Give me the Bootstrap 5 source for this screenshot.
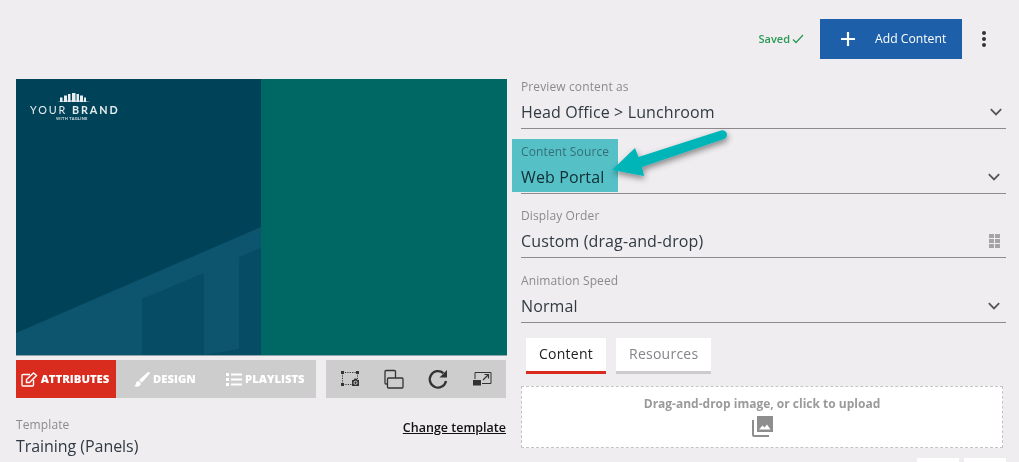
<!DOCTYPE html>
<html lang="en">
<head>
<meta charset="utf-8">
<title>Content editor</title>
<link href="https://cdn.jsdelivr.net/npm/bootstrap@5.3.0/dist/css/bootstrap.min.css" rel="stylesheet">
<style>
html,body{height:462px;overflow:hidden}
body{background:#efedf0;font-family:"Open Sans",sans-serif;color:#333;position:relative}
.topbar{height:79px;padding:19px 13px 0 0}
.saved-note{color:#2a9a55;font-size:11px;font-weight:600;margin-right:16px;gap:2px}
.add-btn{background:#1d5fa8;color:#fff;width:142px;height:40px;font-size:12.2px;border-radius:0;border:0;padding:0 0 0 20px;gap:19px}
.add-btn:hover{background:#1d5fa8;color:#fff}
.kebab{width:44px}
.main-wrap{padding-left:16px;gap:14px}
.left-col{width:491px;flex:none}
.right-col{width:485px;flex:none}
.preview{height:277px;display:block;width:491px;border-bottom:1px solid #8fa5ab}
.tool-row{margin-top:4px;gap:10px;width:490px}
.mode-tabs{background:#cdcdcd;height:38px;width:300px}
.mode-tab{font-size:11.3px;font-weight:800;color:#fff;gap:3px;height:38px}
.mode-tab.active-mode{background:#d92c1f;width:100px;padding-right:2px}
.mode-design{width:96px;padding-left:18px;gap:3px}
.mode-play{width:104px;padding-left:14px;gap:3px}
.tool-icons{background:#cdcdcd;height:38px;width:180px;padding-left:12px;gap:20px}
.tool-icons svg{display:block;flex:none}
.tpl-row{margin-top:19px;width:490px}
.fld-label{font-size:12px;color:#8d8a8e;line-height:16px;letter-spacing:.12px}
.tpl-value{font-size:16px;color:#2f3a42;line-height:22px;margin-top:2px;letter-spacing:-.05px}
.tpl-link{font-size:12.5px;font-weight:600;color:#111;margin-top:2px}
.fld{height:64.6px;width:485px;position:relative}
.fld-line{border-bottom:1px solid #8c8a8c;height:50px}
.fld-value{font-size:16px;line-height:22px;color:#2f3a42;margin-top:4px;height:26px;letter-spacing:.12px}
.tab-row{margin:15.5px 0 0 5px;gap:10px}
.tab-chip{background:#fff;height:36px;font-size:14px;padding:0 13px;border-bottom:3px solid #cdcbce;color:#85838a;line-height:31px;letter-spacing:.25px}
.tab-chip.tab-on{border-bottom-color:#d92c1f;color:#222;width:80px;text-align:center;padding:0}
.dropzone{background:#fff;border:1px dashed #c4c4c4;height:62px;width:482px;margin-top:12px;color:#9a9a9a;font-size:12px;font-weight:700;padding-top:8px}
.dropzone svg{display:block;margin-top:3px}
.mini-row{gap:5px;margin-top:10px;width:485px}
.mini-btn{width:42px;height:20px;background:#fff}
.marker{position:absolute;left:512px;top:139px;width:106px;height:53px;background:#5ccfd4;mix-blend-mode:multiply;pointer-events:none}
.arrow-over{position:absolute;left:600px;top:120px;width:140px;height:70px;pointer-events:none;overflow:visible}
</style>
</head>
<body>
<header class="topbar d-flex justify-content-end align-items-start">
  <div class="d-flex align-items-center">
    <span class="saved-note d-inline-flex align-items-center">Saved
      <svg width="12" height="10" viewBox="0 0 12 10" fill="none" stroke="#2a9a55" stroke-width="1.3"><path d="M1 5.500 4 8.500 11 1"/></svg>
    </span>
    <button class="btn add-btn d-flex align-items-center" type="button">
      <svg width="16" height="16" viewBox="0 0 16 16" stroke="#fff" stroke-width="2.200"><path d="M8 1v14M1 8h14"/></svg>
      <span>Add Content</span>
    </button>
    <div class="kebab d-flex justify-content-center">
      <svg width="6" height="18" viewBox="0 0 6 18" fill="#333"><circle cx="3" cy="3" r="2"/><circle cx="3" cy="9" r="2"/><circle cx="3" cy="15" r="2"/></svg>
    </div>
  </div>
</header>

<main class="main-wrap d-flex">
  <section class="left-col">
    <svg class="preview" viewBox="0 0 491 276" preserveAspectRatio="none">
      <rect width="491" height="276" fill="#006864"/>
      <rect width="245" height="276" fill="#004358"/>
      <path d="M0 254 245 148V276H0Z" fill="#0d546e"/>
      <path d="M126 220 188 194V276H126Z" fill="#064c65"/>
      <path d="M223 178 245 169V276H188L223 270Z" fill="#064c65"/>
      <path d="M41 23Q57 19 75 23Z" fill="#8fb0ba"/>
      <g fill="#e8eef0">
        <rect x="44" y="18.500" width="2.500" height="4.500"/><rect x="48" y="16.500" width="3" height="6.500"/><rect x="52" y="15" width="2.500" height="8"/><rect x="56" y="14" width="3.500" height="9"/><rect x="60.500" y="15" width="2.500" height="8"/><rect x="64" y="16.500" width="3" height="6.500"/><rect x="68" y="18.500" width="2" height="4.500"/>
      </g>
      <text x="14" y="34.500" font-family="Lato,sans-serif" font-size="10.800" letter-spacing="1.900" fill="#e8eef0"><tspan>YOUR </tspan><tspan font-weight="700">BRAND</tspan></text>
      <text x="40" y="40.500" font-family="Lato,sans-serif" font-size="4" font-weight="700" letter-spacing=".3" fill="#d5e0e4">WITH TAGLINE</text>
    </svg>
    <div class="tool-row d-flex">
      <div class="mode-tabs d-flex">
        <div class="mode-tab active-mode d-flex align-items-center justify-content-center">
          <svg width="17" height="15" viewBox="0 0 17 15" fill="none" stroke="#fff" stroke-width="1.400"><path d="M9 2.500H2a1 1 0 0 0-1 1V13a1 1 0 0 0 1 1h9.500a1 1 0 0 0 1-1V8"/><path d="M5.500 7.500 12.500 1l3 2.500-7 7H5.500Z"/></svg>
          <span>ATTRIBUTES</span>
        </div>
        <div class="mode-tab mode-design d-flex align-items-center">
          <svg width="16" height="15" viewBox="0 0 15 14" fill="#fff"><path d="M14.600.3c-.5-.5-1.300-.3-2 .2L6 6.300c-.6.5-.9 1-1 1.500l2 1.900c.6-.1 1.100-.5 1.500-1L14.300 2c.6-.7.800-1.200.3-1.700Z"/><path d="M4.300 8.400C2.700 8.600 2 9.700 1.800 11 1.700 12 1 12.600.2 12.800c1.500 1.100 3.300 1.200 4.700.4 1.200-.7 1.700-1.900 1.400-3Z"/></svg>
          <span>DESIGN</span>
        </div>
        <div class="mode-tab mode-play d-flex align-items-center">
          <svg width="16" height="13" viewBox="0 0 16 13" fill="#fff"><path d="M0 0h3v3H0zM0 5h3v3H0zM0 10h3v3H0zM5 .5h11v2H5zM5 5.500h11v2H5zM5 10.500h11v2H5z"/></svg>
          <span>PLAYLISTS</span>
        </div>
      </div>
      <div class="tool-icons d-flex align-items-center">
        <svg width="24" height="22" viewBox="0 0 24 22" fill="none" stroke="#333">
          <path d="M4.500 4.500h15M4.500 5v11.500h9M19.500 5v6" stroke-dasharray="1.200 1.200"/>
          <path d="M3 3h3v3H3zM18 3h3v3h-3zM3 15h3v3H3z" fill="#333" stroke="none"/>
          <path d="M14 12h1.500l1-1.500h2l1 1.500H21v6h-7z" fill="#333" stroke="none"/><circle cx="17.500" cy="14.800" r="1.600" stroke="#cdcdcd"/>
        </svg>
        <svg width="24" height="22" viewBox="0 0 24 22" fill="none" stroke="#333" stroke-width="1.300"><path d="M13.500 10V3.500a1 1 0 0 0-1-1H4a1 1 0 0 0-1 1V15a1 1 0 0 0 1 1h1.500"/><rect x="5.500" y="10" width="15.500" height="10" rx="1"/></svg>
        <svg width="24" height="22" viewBox="0 0 24 22" fill="none" stroke="#333" stroke-width="2.300"><path d="M20 13a8.200 8.200 0 1 1-2.600-7.800"/><path d="M21 2v7.500h-7.500Z" fill="#333" stroke="none"/></svg>
        <svg width="24" height="22" viewBox="0 0 24 22" fill="none" stroke="#333"><path d="M5 11V4.500h16v11H12"/><path d="M13 12l5-5M14.500 6.500H18.500V10.500" stroke-width="1.200"/><rect x="3" y="12" width="8" height="5.500" fill="#333" stroke="none"/></svg>
      </div>
    </div>
    <div class="tpl-row d-flex justify-content-between align-items-start">
      <div>
        <div class="fld-label">Template</div>
        <div class="tpl-value">Training (Panels)</div>
      </div>
      <a href="#" class="tpl-link">Change template</a>
    </div>
  </section>

  <section class="right-col">
    <div class="fld">
      <div class="fld-line">
        <div class="fld-label">Preview content as</div>
        <div class="fld-value d-flex justify-content-between align-items-center">
          <span>Head Office &gt; Lunchroom</span>
          <svg style="margin-right:4px" width="12" height="8" viewBox="0 0 12 8" fill="none" stroke="#555" stroke-width="1.800"><path d="M.8 1.200 6 6.400 11.200 1.200"/></svg>
        </div>
      </div>
    </div>
    <div class="fld">
      <div class="fld-line">
        <div class="fld-label">Content Source</div>
        <div class="fld-value d-flex justify-content-between align-items-center">
          <span>Web Portal</span>
          <svg style="margin-right:6px" width="12" height="8" viewBox="0 0 12 8" fill="none" stroke="#555" stroke-width="1.800"><path d="M.8 1.200 6 6.400 11.200 1.200"/></svg>
        </div>
      </div>
    </div>
    <div class="fld">
      <div class="fld-line">
        <div class="fld-label">Display Order</div>
        <div class="fld-value d-flex justify-content-between align-items-center">
          <span>Custom (drag-and-drop)</span>
          <svg style="margin-right:6px" width="11" height="14" viewBox="0 0 11 14" fill="#a5a3a5"><path d="M0 0h5v4H0zM6 0h5v4H6zM0 5h5v4H0zM6 5h5v4H6zM0 10h5v4H0zM6 10h5v4H6z"/></svg>
        </div>
      </div>
    </div>
    <div class="fld" style="height:auto">
      <div class="fld-line">
        <div class="fld-label">Animation Speed</div>
        <div class="fld-value d-flex justify-content-between align-items-center">
          <span>Normal</span>
          <svg style="margin-right:6px" width="12" height="8" viewBox="0 0 12 8" fill="none" stroke="#555" stroke-width="1.800"><path d="M.8 1.200 6 6.400 11.200 1.200"/></svg>
        </div>
      </div>
    </div>
    <div class="tab-row d-flex">
      <div class="tab-chip tab-on">Content</div>
      <div class="tab-chip">Resources</div>
    </div>
    <div class="dropzone d-flex flex-column align-items-center">
      <span>Drag-and-drop image, or click to upload</span>
      <svg width="21" height="21" viewBox="0 0 21 21" fill="#8e8e8e"><path d="M5 0h16v16H5Z"/><path d="M7 13.500l3.500-4 2 2 2.500-3 3.500 5Z" fill="#fff"/><path d="M0 4h2v15h15v2H2a2 2 0 0 1-2-2Z"/></svg>
    </div>
    <div class="mini-row d-flex justify-content-end">
      <div class="mini-btn"></div>
      <div class="mini-btn"></div>
    </div>
  </section>
</main>

<div class="marker"></div>
<svg class="arrow-over" viewBox="0 0 140 70">
  <defs><filter id="arrowShade" x="-20%" y="-30%" width="140%" height="170%"><feDropShadow dx="1" dy="3" stdDeviation="3" flood-color="#000" flood-opacity=".45"/></filter></defs>
  <g filter="url(#arrowShade)" fill="#00b5b8">
    <path d="M12 50 35 28 38.500 37 121 10.500a4.500 4.500 0 0 1 3 8.500L42 47 44 56Z"/>
  </g>
</svg>
</body>
</html>
